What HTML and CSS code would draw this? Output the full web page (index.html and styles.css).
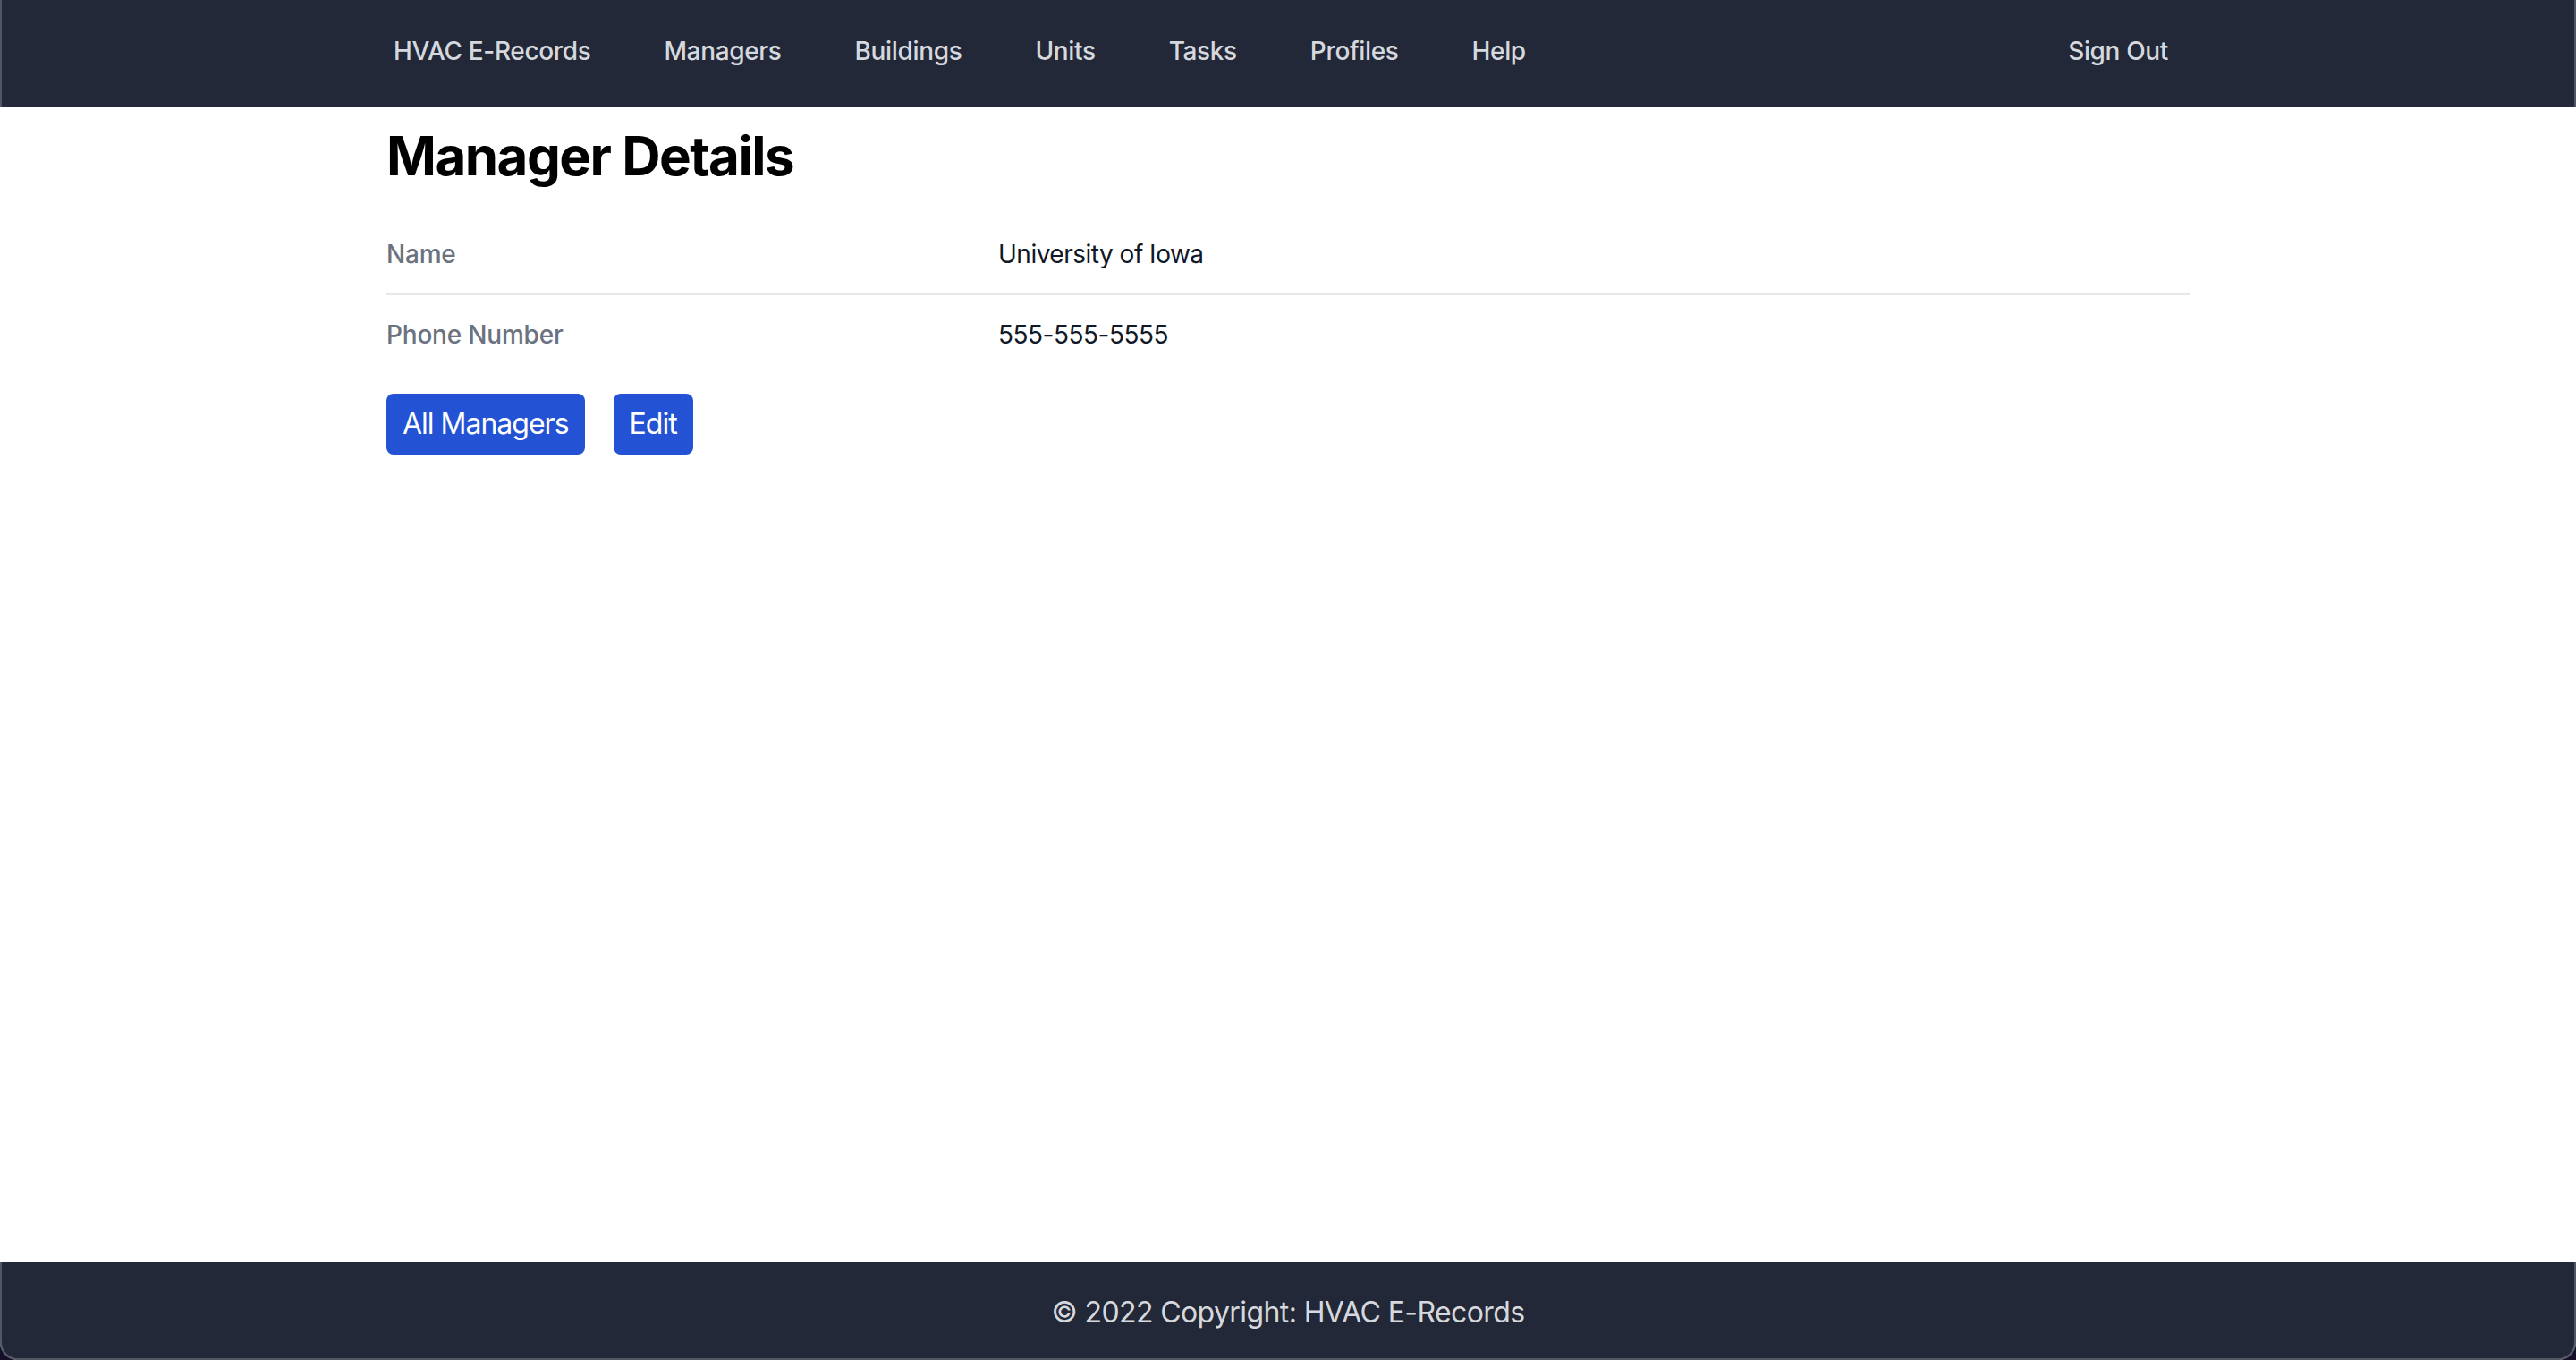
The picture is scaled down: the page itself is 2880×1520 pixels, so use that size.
FILE: index.html
```html
<!DOCTYPE html>
<html lang="en">
<head>
<meta charset="utf-8">
<title>Manager Details - HVAC E-Records</title>
<link rel="stylesheet" href="styles.css">
</head>
<body>
<div class="window">
  <header class="navbar">
    <nav class="nav-inner">
      <a class="nav-link" href="#">HVAC E-Records</a>
      <a class="nav-link" href="#">Managers</a>
      <a class="nav-link" href="#">Buildings</a>
      <a class="nav-link" href="#">Units</a>
      <a class="nav-link" href="#">Tasks</a>
      <a class="nav-link" href="#">Profiles</a>
      <a class="nav-link" href="#">Help</a>
      <a class="nav-link sign-out" href="#">Sign Out</a>
    </nav>
  </header>
  <main class="content">
    <h1 class="title">Manager Details</h1>
    <dl class="details">
      <div class="detail-row">
        <dt class="label">Name</dt>
        <dd class="value">University of Iowa</dd>
      </div>
      <div class="detail-row">
        <dt class="label">Phone Number</dt>
        <dd class="value">555-555-5555</dd>
      </div>
    </dl>
    <div class="actions">
      <a class="btn" href="#">All Managers</a>
      <a class="btn" href="#">Edit</a>
    </div>
  </main>
  <footer class="footer">© 2022 Copyright: HVAC E-Records</footer>
</div>
</body>
</html>
```
FILE: styles.css
```css
* { box-sizing: border-box; }
html {
  margin: 0;
  height: 100%;
  background: #160f2c;
}
body {
  margin: 0;
  height: 100%;
  font-family: Inter, "Noto Sans", "Liberation Sans", sans-serif;
}
.window {
  position: relative;
  height: 1520px;
  display: flex;
  flex-direction: column;
  background: #ffffff;
  border-radius: 0 0 20px 20px;
  overflow: hidden;
}
.window::after {
  content: "";
  position: absolute;
  inset: 0;
  border: 2px solid rgba(255, 255, 255, 0.22);
  border-top: none;
  border-radius: 0 0 20px 20px;
  pointer-events: none;
}
.navbar {
  height: 120px;
  background: #222837;
  flex-shrink: 0;
}
.nav-inner {
  width: 2016px;
  height: 100%;
  margin: 0 auto;
  padding: 0 24px 7px 8px;
  display: flex;
  align-items: center;
  gap: 82px;
}
.nav-link {
  color: #d5d8de;
  text-decoration: none;
  font-size: 28px;
  font-weight: 500;
  line-height: 40px;
  letter-spacing: -0.35px;
}
.sign-out { margin-left: auto; }
.content {
  flex: 1;
  width: 2016px;
  margin: 0 auto;
}
.title {
  margin: 18px 0 0;
  font-size: 60px;
  line-height: 72px;
  font-weight: 700;
  color: #000000;
  letter-spacing: -1.5px;
}
.details {
  margin: 30px 0 0;
}
.detail-row {
  display: grid;
  grid-template-columns: 684px 1fr;
  padding: 24px 0;
  font-size: 28px;
  line-height: 40px;
}
.detail-row + .detail-row {
  border-top: 2px solid #e5e7eb;
}
.label {
  margin: 0;
  color: #6b7280;
  font-weight: 500;
  letter-spacing: -0.2px;
}
.value {
  margin: 0;
  color: #111827;
  letter-spacing: -0.5px;
}
.actions {
  margin-top: 22px;
  display: flex;
  gap: 32px;
}
.btn {
  display: inline-block;
  height: 68px;
  padding: 10px 18px;
  font-size: 32px;
  line-height: 48px;
  letter-spacing: -1px;
  color: #ffffff;
  background: #2352d4;
  border-radius: 8px;
  text-decoration: none;
}
.footer {
  height: 110px;
  flex-shrink: 0;
  background: #222837;
  color: #d5d8de;
  font-size: 32px;
  letter-spacing: -0.6px;
  display: flex;
  align-items: center;
  justify-content: center;
  padding-top: 2px;
}
```
